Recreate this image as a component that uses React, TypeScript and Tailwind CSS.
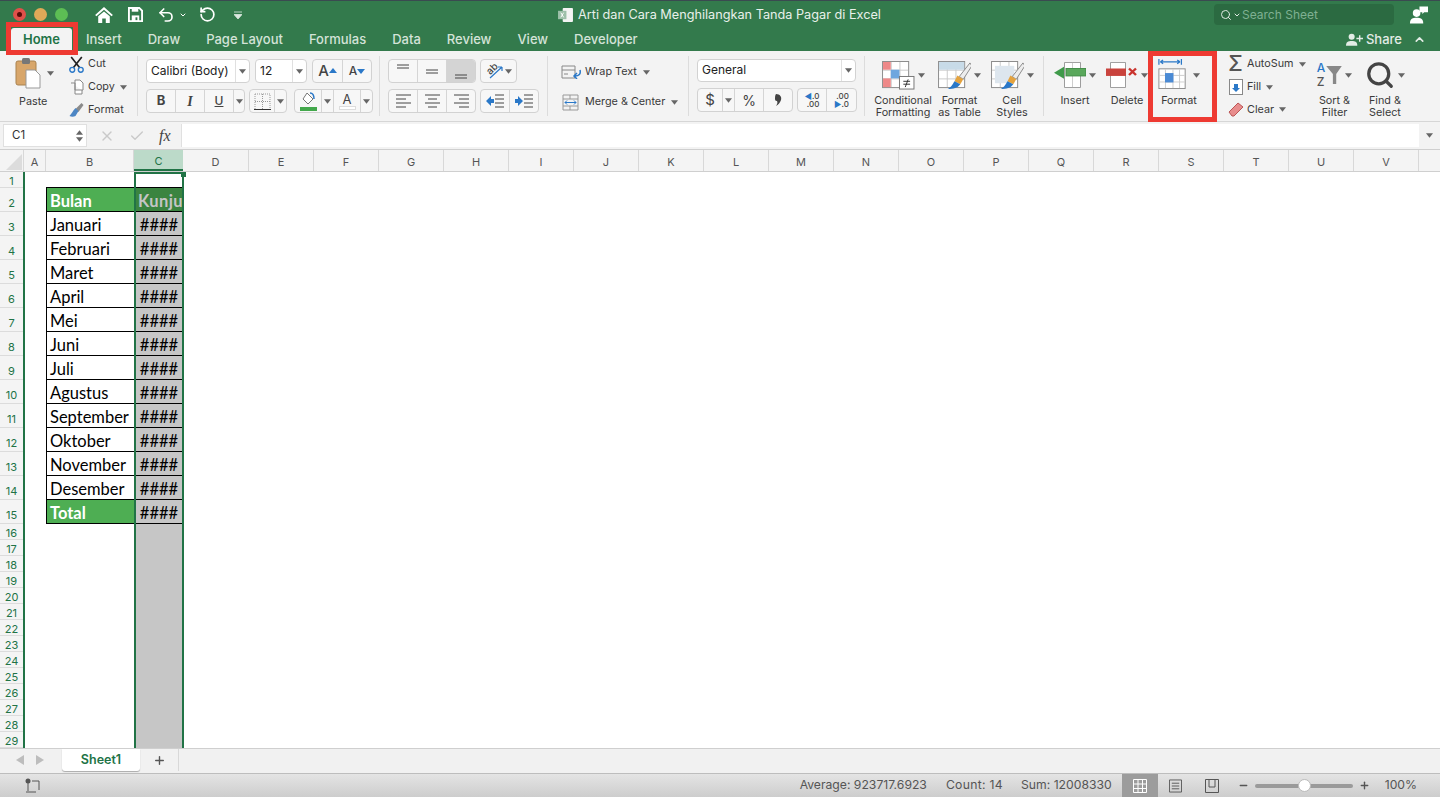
import { Search, ChevronDown, ChevronUp, Plus, Minus, X, Check, RotateCcw, Undo2 } from 'lucide-react';

const COLUMNS = ['D','E','F','G','H','I','J','K','L','M','N','O','P','Q','R','S','T','U','V',''];
const DATA: Record<number, string> = {
  3: 'Januari', 4: 'Februari', 5: 'Maret', 6: 'April', 7: 'Mei', 8: 'Juni', 9: 'Juli',
  10: 'Agustus', 11: 'September', 12: 'Oktober', 13: 'November', 14: 'Desember',
};
const ROWS = Array.from({ length: 29 }, (_, i) => i + 1);

const Caret = ({ className = '' }: { className?: string }) => (
  <svg viewBox="0 0 8 5" className={`w-[7px] h-[5px] shrink-0 ${className}`}><path d="M0 0h8L4 5z" fill="#666" /></svg>
);

const Sep = () => <div className="w-px h-[60px] bg-[#dcdcdc] mt-[5px] shrink-0" />;

const Btn = ({ w, active, children }: { w: string; active?: boolean; children?: React.ReactNode }) => (
  <div className={`${w} h-full flex items-center justify-center border-r border-[#d5d5d5] last:border-r-0 ${active ? 'bg-[#d4d4d4]' : ''}`}>{children}</div>
);

const Group = ({ className = '', children }: { className?: string; children: React.ReactNode }) => (
  <div className={`flex h-[24px] rounded-[4px] border border-[#d2d2d2] bg-[#f7f7f7] overflow-hidden shrink-0 ${className}`}>{children}</div>
);

const Lines = ({ kind }: { kind: 'left' | 'center' | 'right' }) => {
  const rows = kind === 'left'
    ? ['M1 2h15', 'M1 6h10', 'M1 10h15', 'M1 14h10']
    : kind === 'center'
    ? ['M1 2h15', 'M4 6h9', 'M1 10h15', 'M4 14h9']
    : ['M1 2h15', 'M6 6h10', 'M1 10h15', 'M6 14h10'];
  return <svg viewBox="0 0 17 16" className="w-[17px] h-[16px]"><path d={rows.join('')} stroke="#444" strokeWidth="1" /></svg>;
};

const Indent = ({ flip }: { flip?: boolean }) => (
  <svg viewBox="0 0 20 14" className="w-[20px] h-[14px]">
    <path d="M10 1h9M10 5h9M10 9h9M10 13h9" stroke="#444" />
    {flip ? <path d="M1 5h3V2l5 5-5 5V9H1z" fill="#2a78c8" /> : <path d="M9 5H6V2L1 7l5 5V9h3z" fill="#2a78c8" />}
  </svg>
);

const TableGlyph = ({ children }: { children?: React.ReactNode }) => (
  <svg viewBox="0 0 34 30" className="w-[33px] h-[29px] -mt-[1px]">
    <rect x="0.5" y="0.5" width="27" height="27" fill="#fff" stroke="#8a8a8a" />
    <path d="M9.5 1v26M18.5 1v26M1 9.5h26M1 18.5h26" stroke="#c9c9c9" />
    {children}
  </svg>
);

const Brush = () => (
  <g>
    <path d="M33 2 22 16l4 3L35 5z" fill="#ededed" stroke="#8a8a8a" />
    <path d="M20 15l6 4-3 5-6-3z" fill="#e4a33f" />
    <path d="M17 21l6 3c-3 4-7 5-13 5 4-2 5-5 7-8z" fill="#2a78c8" />
  </g>
);

const Large = ({ w, label, children, caret = true }: { w: string; label: React.ReactNode; children: React.ReactNode; caret?: boolean }) => (
  <div className={`${w} shrink-0 flex flex-col items-center`}>
    <div className="h-[31px] mt-[9px] flex items-center gap-[3px]">
      {children}
      {caret && <Caret />}
    </div>
    <div className="mt-[4px] text-[10.8px] leading-[12px] text-center text-[#3a3a3a] whitespace-nowrap">{label}</div>
  </div>
);

const Small = ({ icon, label, caret }: { icon: React.ReactNode; label: string; caret?: boolean }) => (
  <div className="h-[23px] flex items-center">
    <div className="w-[21px] flex justify-center">{icon}</div>
    <span className="text-[10.8px] ml-[1px] mr-[5px] text-[#3a3a3a]">{label}</span>
    {caret && <Caret />}
  </div>
);

const Ribbon = () => (
  <div className="h-[71px] bg-[#f3f3f3] border-b border-[#d6d6d6] flex shrink-0 relative">
    {/* clipboard */}
    <div className="w-[137px] shrink-0 flex pl-[15px]">
      <div className="w-[51px] flex flex-col">
        <div className="flex items-center h-[38px] mt-[3px] gap-[6px]">
          <svg viewBox="0 0 26 32" className="w-[26px] h-[32px]">
            <rect x="1" y="4" width="20" height="24" rx="2" fill="#d8a66a" stroke="#a9824f" />
            <rect x="7" y="1" width="8" height="6" rx="1.5" fill="#777" />
            <path d="M11 13h9l5 5v13H11z" fill="#fff" stroke="#999" />
          </svg>
          <Caret />
        </div>
        <div className="text-[10.8px] mt-[2px] pl-[4px] text-[#3a3a3a]">Paste</div>
      </div>
      <div className="flex flex-col mt-[2px]">
        <Small label="Cut" icon={
          <svg viewBox="0 0 16 16" className="w-[17px] h-[17px]"><path d="M3 1l8 10M13 1 5 11" stroke="#222" strokeWidth="1.6" /><circle cx="4" cy="13" r="2.3" fill="none" stroke="#2a78c8" strokeWidth="1.3" /><circle cx="12" cy="13" r="2.3" fill="none" stroke="#2a78c8" strokeWidth="1.3" /></svg>
        } />
        <Small label="Copy" caret icon={
          <svg viewBox="0 0 16 16" className="w-[16px] h-[16px]"><path d="M6 1h5l3 3v7H6z M2 4h4v11h7v-4" fill="#fff" stroke="#888" /></svg>
        } />
        <Small label="Format" icon={
          <svg viewBox="0 0 16 16" className="w-[17px] h-[16px]"><path d="M7 7l6-6 2 2-5 7z" fill="#8a8a8a" /><path d="M7 6l3 3-3 5c-2 1-4 1-6 0 2-2 3-5 6-8z" fill="#4d86c4" /></svg>
        } />
      </div>
    </div>
    <Sep />
    {/* font */}
    <div className="w-[241px] shrink-0 pl-[8px] pt-[8px] flex flex-col gap-[6px]">
      <div className="flex gap-[5px]">
        <div className="w-[104px] h-[24px] bg-white border border-[#d2d2d2] rounded-[4px] flex items-center pl-[4px] shrink-0">
          <span className="text-[12px] flex-1 text-[#222] -mt-[1px]">Calibri (Body)</span>
          <div className="w-[14px] h-full border-l border-[#e0e0e0] flex items-center justify-center"><Caret /></div>
        </div>
        <div className="w-[52px] h-[24px] bg-white border border-[#d2d2d2] rounded-[4px] flex items-center pl-[4px] shrink-0">
          <span className="text-[12px] flex-1 text-[#222] -mt-[1px]">12</span>
          <div className="w-[14px] h-full border-l border-[#e0e0e0] flex items-center justify-center"><Caret /></div>
        </div>
        <Group>
          <Btn w="w-[30px]"><span className="text-[15px] text-[#444] font-medium">A</span><svg viewBox="0 0 8 5" className="w-[8px] h-[5px] mb-[2px]"><path d="M0 5h8L4 0z" fill="#2a78c8" /></svg></Btn>
          <Btn w="w-[28px]"><span className="text-[12px] text-[#444] font-medium">A</span><svg viewBox="0 0 8 5" className="w-[8px] h-[5px]"><path d="M0 0h8L4 5z" fill="#2a78c8" /></svg></Btn>
        </Group>
      </div>
      <div className="flex">
        <Group>
          <Btn w="w-[29px]"><span className="text-[13px] font-bold text-[#444]">B</span></Btn>
          <Btn w="w-[29px]"><span className="text-[14px] italic font-bold text-[#444]" style={{ fontFamily: '"Liberation Serif", serif' }}>I</span></Btn>
          <Btn w="w-[29px]"><span className="text-[12px] underline font-medium text-[#444]">U</span></Btn>
          <Btn w="w-[10px]"><Caret /></Btn>
        </Group>
        <Group className="ml-[4px]">
          <Btn w="w-[25px]">
            <svg viewBox="0 0 17 17" className="w-[17px] h-[17px]"><path d="M1 1h15v15M1 1v15M8.500 1v15M1 8.500h15" stroke="#999" strokeDasharray="1 1" fill="none" /><path d="M0 16.500h17" stroke="#333" /></svg>
          </Btn>
          <Btn w="w-[11px]"><Caret /></Btn>
        </Group>
        <Group className="ml-[7px]">
          <Btn w="w-[27px]">
            <svg viewBox="0 0 19 19" className="w-[19px] h-[19px]"><path d="M8 1l6 6-5 5-5-5z" fill="#fff" stroke="#777" /><path d="M11 1c3 0 4 2 4 6" stroke="#2a78c8" strokeWidth="1.5" fill="none" /><rect x="1" y="15" width="17" height="4" fill="#43a84c" /></svg>
          </Btn>
          <Btn w="w-[12px]"><Caret /></Btn>
          <Btn w="w-[27px]">
            <div className="flex flex-col items-center"><span className="text-[13px] leading-[14px] text-[#444]">A</span><div className="w-[17px] h-[4px] bg-white border border-[#ddd]" /></div>
          </Btn>
          <Btn w="w-[11px]"><Caret /></Btn>
        </Group>
      </div>
    </div>
    <Sep />
    {/* alignment */}
    <div className="w-[167px] shrink-0 pl-[8px] pt-[8px] flex flex-col gap-[6px]">
      <div className="flex gap-[4px]">
        <Group>
          <Btn w="w-[29px]"><svg viewBox="0 0 14 12" className="w-[14px] h-[12px] -mt-[2px]"><path d="M1 1h12M1 4h12" stroke="#444" /></svg></Btn>
          <Btn w="w-[29px]"><svg viewBox="0 0 14 12" className="w-[14px] h-[12px]"><path d="M1 5h12M1 8h12" stroke="#444" /></svg></Btn>
          <Btn w="w-[28px]" active><svg viewBox="0 0 14 12" className="w-[14px] h-[12px] mt-[6px]"><path d="M1 7h12M1 10h12" stroke="#444" /></svg></Btn>
        </Group>
        <Group>
          <div className="w-[35px] flex items-center justify-center gap-[2px]">
            <div className="relative w-[18px] h-[16px]">
              <span className="absolute left-[1px] -top-[2px] text-[10px] font-medium text-[#444] -rotate-45">ab</span>
              <svg viewBox="0 0 18 16" className="absolute inset-0 w-[18px] h-[16px]"><path d="M5 15 17 4M17 4h-4M17 4v4" stroke="#2a78c8" strokeWidth="1.2" fill="none" /></svg>
            </div>
            <Caret />
          </div>
        </Group>
      </div>
      <div className="flex gap-[4px]">
        <Group>
          <Btn w="w-[29px]"><Lines kind="left" /></Btn>
          <Btn w="w-[29px]"><Lines kind="center" /></Btn>
          <Btn w="w-[28px]"><Lines kind="right" /></Btn>
        </Group>
        <Group>
          <Btn w="w-[29px]"><Indent /></Btn>
          <Btn w="w-[28px]"><Indent flip /></Btn>
        </Group>
      </div>
    </div>
    <Sep />
    {/* wrap */}
    <div className="w-[140px] shrink-0 pl-[13px] pt-[9px] flex flex-col gap-[6px]">
      <div className="h-[24px] flex items-center">
        <svg viewBox="0 0 21 14" className="w-[21px] h-[14px] mr-[3px]"><path d="M1 1h13v12H1zM1 5h13M3 9h4" fill="none" stroke="#888" /><path d="M19 5c1 4-1 6-5 6M16 8l-3 3 3 3" stroke="#2a78c8" strokeWidth="1.5" fill="none" /></svg>
        <span className="text-[10.8px] mr-[6px] text-[#3a3a3a]">Wrap Text</span>
        <Caret />
      </div>
      <div className="h-[24px] flex items-center">
        <svg viewBox="0 0 17 17" className="w-[17px] h-[17px] ml-[1px] mr-[6px]"><path d="M1 1h15v15H1zM1 5h15M1 12h15M8 1v4M8 12v4" fill="none" stroke="#999" /><path d="M3 8.500h11M5 6.500l-2 2 2 2M12 6.500l2 2-2 2" stroke="#2a78c8" fill="none" /></svg>
        <span className="text-[10.8px] mr-[6px] text-[#3a3a3a]">Merge &amp; Center</span>
        <Caret />
      </div>
    </div>
    <Sep />
    {/* number */}
    <div className="w-[175px] shrink-0 pl-[8px] pt-[8px] flex flex-col gap-[6px]">
      <div className="w-[159px] h-[23px] bg-white border border-[#d2d2d2] rounded-[4px] flex items-center pl-[4px]">
        <span className="text-[12px] flex-1 text-[#222] -mt-[1px]">General</span>
        <div className="w-[14px] h-full border-l border-[#e0e0e0] flex items-center justify-center"><Caret /></div>
      </div>
      <div className="flex gap-[4px]">
        <Group>
          <Btn w="w-[25px]"><span className="text-[15px] text-[#444]">$</span></Btn>
          <Btn w="w-[12px]"><Caret /></Btn>
          <Btn w="w-[29px]"><span className="text-[14px] text-[#444]">%</span></Btn>
          <Btn w="w-[28px]"><svg viewBox="0 0 7 12" className="w-[7px] h-[12px]"><path d="M1 0c4 0 6 3 5 6-1 3-3 5-5 6 1-2 2-3 1-5-2 0-2-1-2-3 0-3 1-4 1-4z" fill="#444" /></svg></Btn>
        </Group>
        <Group>
          <Btn w="w-[29px]"><div className="text-[8px] leading-[8px] font-medium text-[#444] text-right"><span className="text-[#2a78c8]">◀</span>.0<br />.00</div></Btn>
          <Btn w="w-[29px]"><div className="text-[8px] leading-[8px] font-medium text-[#444] text-right">.00<br /><span className="text-[#2a78c8]">▶</span>.0</div></Btn>
        </Group>
      </div>
    </div>
    <Sep />
    {/* styles */}
    <div className="w-[178px] shrink-0 flex pl-[9px]">
      <Large w="w-[58px]" label={<>Conditional<br />Formatting</>}>
        <TableGlyph>
          <rect x="1" y="1" width="8" height="8" fill="#e88" /><rect x="9" y="9" width="9" height="9" fill="#6ea6de" /><rect x="1" y="18" width="8" height="9" fill="#e88" />
          <rect x="18" y="16" width="15" height="13" fill="#fff" stroke="#777" /><path d="M22 21h7M22 24h7M27 19l-3 8" stroke="#333" />
        </TableGlyph>
      </Large>
      <Large w="w-[55px]" label={<>Format<br />as Table</>}>
        <TableGlyph><rect x="1" y="1" width="26" height="8" fill="#c8dbe8" /><Brush /></TableGlyph>
      </Large>
      <Large w="w-[50px]" label={<>Cell<br />Styles</>}>
        <TableGlyph><rect x="4" y="5" width="20" height="18" fill="#dde6ee" /><Brush /></TableGlyph>
      </Large>
    </div>
    <Sep />
    {/* cells */}
    <div className="w-[181px] shrink-0 flex pl-[6px]">
      <Large w="w-[50px]" label="Insert">
        <svg viewBox="0 0 32 28" preserveAspectRatio="none" className="w-[32px] h-[26px] -mt-[2px]"><path d="M10.500.500h16v27h-16z" fill="#fff" stroke="#999" /><path d="M18.500 1v6M18.500 15v12" stroke="#ccc" /><rect x="12" y="7" width="20" height="8" fill="#5aa85c" stroke="#3f8a44" /><path d="M10 5v13L0 11.500z" fill="#3f9a4a" /></svg>
      </Large>
      <Large w="w-[54px]" label="Delete">
        <svg viewBox="0 0 32 28" preserveAspectRatio="none" className="w-[32px] h-[26px] -mt-[2px]"><path d="M4.500.500h15v27h-15z" fill="#fff" stroke="#999" /><rect x="0" y="7" width="20" height="8" fill="#c9433d" /><path d="M23 7l7 7M30 7l-7 7" stroke="#c9332d" strokeWidth="2.4" /></svg>
      </Large>
      <Large w="w-[50px]" label="Format">
        <svg viewBox="0 0 30 32" className="w-[29px] h-[30px] mr-[3px] -mt-[3px]"><path d="M.500 0v6M24.500 0v6M2 3h21M2 3l3-2M2 3l3 2M23 3l-3-2M23 3l-3 2" stroke="#2a78c8" fill="none" strokeWidth="1.300" /><rect x=".500" y="10.500" width="28" height="21" fill="#fff" stroke="#8a8a8a" /><path d="M7.500 11v20M15.500 11v20M22.500 11v20M1 17.500h27M1 24.500h27" stroke="#ccc" /><rect x="7" y="15" width="9" height="10" fill="#4a8ad4" /></svg>
      </Large>
    </div>
    {/* editing */}
    <div className="w-[84px] shrink-0 flex flex-col mt-[2px]">
      <Small label="AutoSum" caret icon={<span className="text-[21px] leading-[20px] font-medium text-[#555]">Σ</span>} />
      <Small label="Fill" caret icon={
        <svg viewBox="0 0 14 16" className="w-[14px] h-[16px]"><rect x="0.500" y="0.500" width="13" height="15" fill="#fff" stroke="#888" /><path d="M5 5h4v4h2l-4 4-4-4h2z" fill="#2a78c8" /></svg>
      } />
      <Small label="Clear" caret icon={
        <svg viewBox="0 0 16 15" className="w-[16px] h-[15px]"><path d="M1 10 10 1l5 4-9 9H4z" fill="#e88d8d" stroke="#b55" /></svg>
      } />
    </div>
    <Large w="w-[51px]" label={<>Sort &amp;<br />Filter</>}>
      <div className="flex items-center gap-[1px] -mt-[2px]">
        <div className="flex flex-col text-[12px] leading-[14px] font-medium"><span className="text-[#2a78c8]">A</span><span className="text-[#555]">Z</span></div>
        <svg viewBox="0 0 14 18" className="w-[16px] h-[20px]"><path d="M0 1h14L9 8v9H6V8z" fill="#888" /></svg>
      </div>
    </Large>
    <Large w="w-[50px]" label={<>Find &amp;<br />Select</>}>
      <Search size={30} color="#444" strokeWidth={2.6} className="-mt-[2px]" />
    </Large>
  </div>
);

const SheetRow = ({ n }: { n: number }) => {
  const tall = n >= 2 && n <= 15;
  const label = n === 2 ? 'Bulan' : n === 15 ? 'Total' : DATA[n];
  const head = n === 2 || n === 15;
  const inTable = n >= 2 && n <= 15;
  return (
    <div className={`flex ${tall ? 'h-[24px]' : 'h-[16px]'}`}>
      <div className={`w-[23px] shrink-0 bg-[#f4f4f4] border-b border-[#dcdcdc] text-[11px] text-[#217346] flex items-center justify-center ${tall ? 'pt-[8px]' : 'pt-[4px]'}`}>{n}</div>
      <div className="w-[2px] shrink-0 bg-[#217346]" />
      <div className="w-[21px] shrink-0" />
      {/* column B */}
      <div
        className={`w-[88px] shrink-0 border-b pl-[3px] flex items-center text-[16.5px] whitespace-nowrap ${tall ? 'pt-[3px]' : ''} ${n <= 15 ? 'border-black' : 'border-transparent'} ${head ? 'bg-[#4eae53] font-bold text-white' : 'text-black'} ${inTable ? 'border-l border-l-black' : ''}`}
        style={{ fontFamily: 'Lato, sans-serif' }}
      >{label}</div>
      {/* column C */}
      <div className="w-[2px] shrink-0" />
      <div
        className={`w-[46px] shrink-0 overflow-hidden flex items-center justify-center text-[16.5px] ${tall ? 'pt-[3px]' : ''} ${n === 1 ? 'bg-white border-b border-black' : n === 2 ? 'bg-[#3b8440] border-b border-black font-bold text-[#c5c5c5]' : n <= 15 ? 'bg-[#c6c6c6] border-b border-black text-black' : 'bg-[#c6c6c6]'}`}
        style={{ fontFamily: 'Lato, sans-serif' }}
      >
        {n === 2 ? <span className="pl-[2px] w-full whitespace-nowrap tracking-[0.4px]">Kunju</span> : n > 2 && n <= 15 ? '####' : ''}
      </div>
    </div>
  );
};

export default function App() {
  return (
    <div className="w-[1440px] h-[797px] overflow-hidden flex flex-col bg-white relative" style={{ fontFamily: 'Inter, "Noto Sans", sans-serif' }}>
      {/* title bar */}
      <div className="bg-[#337a4c] border-t border-[#3a4a50] h-[28px] flex items-center shrink-0 text-white">
        <div className="w-[92px] shrink-0 flex items-center pl-[13px] gap-[8px]">
          <div className="w-[13px] h-[13px] rounded-full bg-[#e0504a] flex items-center justify-center"><div className="w-[5px] h-[5px] rounded-full bg-[#5a0a08]" /></div>
          <div className="w-[13px] h-[13px] rounded-full bg-[#dfa958]" />
          <div className="w-[13px] h-[13px] rounded-full bg-[#5cbd54]" />
        </div>
        <div className="w-[466px] shrink-0 flex items-center pl-[3px]">
          <svg viewBox="0 0 20 18" className="w-[18px] h-[16px]"><path d="M10 0 0 9l1.500 1.500L10 3l8.500 7.500L20 9z" fill="#fff" /><path d="M3.500 10.500 10 5l6.500 5.500V18h-4.500v-5H8v5H3.500z" fill="#fff" /></svg>
          <svg viewBox="0 0 16 16" className="w-[15px] h-[15px] ml-[15px]"><path d="M1 1h11l3 3v11H1z" fill="none" stroke="#fff" strokeWidth="2" /><rect x="4" y="1" width="7" height="4" fill="#fff" /><rect x="4" y="9" width="8" height="6" fill="#fff" /><rect x="8" y="11" width="2" height="3" fill="#337a4c" /></svg>
          <Undo2 size={18} strokeWidth={2.2} className="ml-[14px]" />
          <ChevronDown size={8} strokeWidth={3} className="ml-[4px]" />
          <RotateCcw size={17} strokeWidth={2.4} className="ml-[12px]" />
          <svg viewBox="0 0 8 8" className="w-[8px] h-[8px] ml-[18px]"><path d="M0 1h8M0 3.500h8L4 8z" stroke="#dce9e0" fill="#dce9e0" strokeWidth="0.8" /></svg>
        </div>
        <svg viewBox="0 0 16 15" className="w-[15px] h-[14px] shrink-0 mr-[5px]"><rect x="5" y="0" width="11" height="15" rx="1" fill="#f4f4f4" /><rect x="0" y="3" width="9" height="9" fill="#9dbfa9" /><path d="M3 5l3 5M6 5l-3 5" stroke="#fff" /></svg>
        <div className="w-[636px] shrink-0 text-[12.7px] text-[#e8f0ea] whitespace-nowrap pt-[1px]">Arti dan Cara Menghilangkan Tanda Pagar di Excel</div>
        <div className="w-[180px] h-[21px] shrink-0 bg-[#2b6a41] rounded-[4px] flex items-center pl-[6px] gap-[1px]">
          <Search size={12} color="#dfe9e2" />
          <ChevronDown size={8} color="#dfe9e2" strokeWidth={3} />
          <span className="text-[12px] text-[#7fb092]">Search Sheet</span>
        </div>
        <svg viewBox="0 0 20 18" className="w-[19px] h-[18px] ml-[15px] shrink-0"><circle cx="8" cy="7" r="4" fill="#fff" /><path d="M1 18c0-5 3-6 7-6s7 1 7 6z" fill="#fff" /><path d="M11 0h9v6h-4l-2 2V6h-3z" fill="#fff" /></svg>
      </div>
      {/* tabs */}
      <div className="bg-[#337a4c] h-[23px] flex shrink-0 text-[13px] font-medium text-[#d3e3d8]">
        <div className="w-[11px] shrink-0" />
        <div className="w-[61px] shrink-0 bg-[#f3f3f3] rounded-t-[3px] flex items-center justify-center text-[#217346] font-semibold">Home</div>
        <div className="flex items-center pl-[14px] gap-[26px] flex-1 whitespace-nowrap">
          <span>Insert</span><span>Draw</span><span>Page Layout</span><span>Formulas</span><span>Data</span><span>Review</span><span>View</span><span>Developer</span>
          <div className="ml-auto flex items-center text-[#e3ece6] pr-[14px]">
            <svg viewBox="0 0 18 13" className="w-[17px] h-[13px] mr-[3px]"><circle cx="6" cy="3.500" r="3.200" fill="#e3ece6" /><path d="M0 13c0-4 2-5 6-5s6 1 6 5z" fill="#e3ece6" /><path d="M14.500 2v7M11 5.500h7" stroke="#e3ece6" strokeWidth="1.500" /></svg>
            <span className="mr-[11px]">Share</span><ChevronUp size={13} strokeWidth={3} />
          </div>
        </div>
      </div>
      <Ribbon />
      {/* formula bar */}
      <div className="h-[28px] bg-[#f3f3f3] border-b border-[#cfcfcf] flex shrink-0">
        <div className="w-[84px] ml-[3px] my-[2px] bg-white border border-[#e0e0e0] flex items-center pl-[8px] text-[11.5px] text-[#333]">
          <span className="flex-1">C1</span>
          <div className="flex flex-col gap-[2px] pr-[3px]">
            <svg viewBox="0 0 8 5" className="w-[7px] h-[5px]"><path d="M0 5h8L4 0z" fill="#666" /></svg>
            <svg viewBox="0 0 8 5" className="w-[7px] h-[5px]"><path d="M0 0h8L4 5z" fill="#666" /></svg>
          </div>
        </div>
        <div className="w-[94px] shrink-0 flex items-center pl-[12px] gap-[14px]">
          <X size={16} color="#c9c9c9" strokeWidth={2} />
          <Check size={16} color="#c9c9c9" strokeWidth={2} />
          <span className="text-[16px] italic text-[#444]" style={{ fontFamily: '"Liberation Serif", serif' }}>fx</span>
        </div>
        <div className="flex-1 bg-white border-l border-[#e0e0e0] my-[2px]" />
        <div className="w-[21px] flex items-center justify-center"><Caret /></div>
      </div>
      {/* column headers */}
      <div className="h-[22px] flex shrink-0 bg-[#f4f4f4] border-b border-[#cfcfcf] text-[11px] text-[#555]">
        <div className="w-[24px] shrink-0 border-r border-[#d8d8d8] relative overflow-hidden">
          <svg viewBox="0 0 24 22" className="w-[24px] h-[22px]"><path d="M22 4v16H6z" fill="#dcdcdc" /></svg>
        </div>
        <div className="w-[22px] shrink-0 border-r border-[#d8d8d8] flex items-center justify-center pt-[3px]">A</div>
        <div className="w-[88px] shrink-0 border-r border-[#d8d8d8] flex items-center justify-center pt-[3px]">B</div>
        <div className="w-[49px] shrink-0 bg-[#bcdac9] border-b-2 border-[#217346] text-[#217346] flex items-center justify-center pt-[3px]">C</div>
        {COLUMNS.map((c, i) => (
          <div key={i} className={`${i === 0 ? 'w-[66px]' : 'w-[65px]'} shrink-0 border-r border-[#d8d8d8] flex items-center justify-center pt-[3px]`}>{c}</div>
        ))}
      </div>
      {/* grid */}
      <div className="h-[576px] overflow-hidden shrink-0 relative">
        {ROWS.map((n) => <SheetRow key={n} n={n} />)}
        <div className="absolute left-[134px] top-0 bottom-0 w-[50px] border-x-2 border-[#217346]" />
        <div className="absolute left-[134px] top-0 w-[50px] h-[2px] bg-[#217346]" />
        <div className="absolute left-[181px] top-0 w-[5px] h-[5px] bg-[#217346]" />
      </div>
      {/* sheet tabs */}
      <div className="h-[25px] bg-[#f1f1f1] border-t border-[#cfcfcf] flex shrink-0">
        <div className="w-[62px] shrink-0 flex items-center pl-[16px] gap-[12px] pb-[2px]">
          <svg viewBox="0 0 8 10" className="w-[8px] h-[10px]"><path d="M8 0v10L0 5z" fill="#bdbdbd" /></svg>
          <svg viewBox="0 0 8 10" className="w-[8px] h-[10px]"><path d="M0 0v10l8-5z" fill="#bdbdbd" /></svg>
        </div>
        <div className="w-[78px] h-[22px] shrink-0 bg-white rounded-b-[3px] shadow-[0_1px_1px_#aaa] flex items-center justify-center text-[12.5px] font-semibold text-[#217346]">Sheet1</div>
        <div className="w-[39px] h-[22px] shrink-0 border-r border-[#d8d8d8] flex items-center justify-center"><Plus size={13} color="#555" strokeWidth={2.6} /></div>
      </div>
      {/* status bar */}
      <div className="flex-1 bg-gradient-to-b from-[#e4e4e4] to-[#cdcdcd] border-t border-[#bdbdbd] flex items-center text-[12.2px] text-[#555]">
        <svg viewBox="0 0 16 16" className="w-[16px] h-[16px] ml-[25px]"><circle cx="3" cy="3" r="2.500" fill="#555" /><path d="M3 5v8M7 3h7v9M1 14h10" stroke="#555" fill="none" /></svg>
        <div className="ml-auto flex items-center h-full">
          <span className="mr-[19px]">Average: 923717.6923</span>
          <span className="mr-[18px] tracking-[0.3px]">Count: 14</span>
          <span className="mr-[10px]">Sum: 12008330</span>
          <div className="w-[36px] h-full bg-[#9c9c9c] flex items-center justify-center">
            <svg viewBox="0 0 14 14" className="w-[14px] h-[14px]"><path d="M.5.5h13v13H.5zM5 1v13M9.500 1v13M1 5h13M1 9.500h13" fill="none" stroke="#fff" /></svg>
          </div>
          <div className="w-[36px] flex justify-center">
            <svg viewBox="0 0 14 14" className="w-[13px] h-[14px]"><path d="M.5.5h13v13H.5zM3 4h8M3 7h8M3 10h8" fill="none" stroke="#555" /></svg>
          </div>
          <div className="w-[36px] flex justify-center">
            <svg viewBox="0 0 14 14" className="w-[14px] h-[14px]"><path d="M.5.5h13v13H.5zM4 1v7h6V1" fill="none" stroke="#555" /></svg>
          </div>
          <Minus size={11} strokeWidth={3} className="ml-[8px]" />
          <div className="w-[98px] h-[4px] bg-[#9a9a9a] rounded-full mx-[6px] relative">
            <div className="absolute left-[43px] top-[-5px] w-[13px] h-[13px] rounded-full bg-white border border-[#bbb]" />
          </div>
          <Plus size={11} strokeWidth={3} />
          <span className="ml-[15px] mr-[23px]">100%</span>
        </div>
      </div>
      {/* annotation boxes */}
      <div className="absolute left-[6px] top-[22px] w-[72px] h-[33px] border-[5px] border-[#ee3a32]" />
      <div className="absolute left-[1148px] top-[51px] w-[69px] h-[71px] border-[5px] border-[#ee3a32]" />
    </div>
  );
}
